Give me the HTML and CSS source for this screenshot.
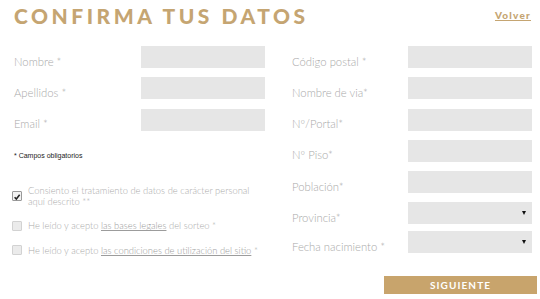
FILE: index.html
```html
<!DOCTYPE html>
<html lang="es">
<head>
<meta charset="utf-8">
<title>Confirma tus datos</title>
<link rel="stylesheet" href="styles.css">
</head>
<body>
<div class="page">
  <header class="head">
    <h1 class="title">CONFIRMA TUS DATOS</h1>
    <a class="back" href="#">Volver</a>
  </header>
  <div class="form">
    <div class="col col-left">
      <div class="row"><span class="label">Nombre *</span><span class="field"></span></div>
      <div class="row"><span class="label">Apellidos *</span><span class="field"></span></div>
      <div class="row"><span class="label">Email *</span><span class="field"></span></div>
      <p class="req">* Campos obligatorios</p>
      <div class="checks">
        <div class="check">
          <span class="box checked"><svg viewBox="0 0 10 10" width="10" height="10"><path d="M2 5.2 L4.2 7.6 L8.3 2.3" fill="none" stroke="#222" stroke-width="1.9"/></svg></span>
          <span class="ctext">Consiento el tratamiento de datos de carácter personal<br>aquí descrito **</span>
        </div>
        <div class="check">
          <span class="box"></span>
          <span class="ctext">He leído y acepto <a href="#">las bases legales</a> del sorteo *</span>
        </div>
        <div class="check">
          <span class="box"></span>
          <span class="ctext">He leído y acepto <a href="#">las condiciones de utilización del sitio</a> *</span>
        </div>
      </div>
    </div>
    <div class="col col-right">
      <div class="row"><span class="label">Código postal *</span><span class="field"></span></div>
      <div class="row"><span class="label">Nombre de via*</span><span class="field"></span></div>
      <div class="row"><span class="label">Nº/Portal*</span><span class="field"></span></div>
      <div class="row"><span class="label">Nº Piso*</span><span class="field"></span></div>
      <div class="row"><span class="label">Población*</span><span class="field"></span></div>
      <div class="row"><span class="label">Provincia*</span><span class="field select"><span class="arrow"></span></span></div>
      <div class="row row-last"><span class="label">Fecha nacimiento *</span><span class="field select"><span class="arrow"></span></span></div>
      <button class="next" type="button">SIGUIENTE</button>
    </div>
  </div>
</div>
</body>
</html>
```

FILE: styles.css
```css
html, body {
  margin: 0;
  padding: 0;
  background: #ffffff;
}
.page {
  width: 540px;
  height: 299px;
  overflow: hidden;
  font-family: Lato, "Liberation Sans", sans-serif;
}
.head {
  display: flex;
  justify-content: space-between;
  align-items: flex-start;
  padding: 4px 9px 0 14px;
  height: 42px;
  box-sizing: border-box;
}
.title {
  margin: 0;
  font-size: 21px;
  line-height: 24px;
  font-weight: 900;
  letter-spacing: 3.5px;
  color: #c5a572;
}
.back {
  margin-top: 5px;
  font-size: 10px;
  font-weight: 900;
  letter-spacing: 1.2px;
  color: #c5a572;
  text-decoration: underline;
}
.form {
  display: flex;
  padding-left: 14px;
  padding-top: 4px;
  gap: 27px;
}
.col {
  display: flex;
  flex-direction: column;
}
.col-left { width: 251px; }
.col-right { width: 240px; }
.row {
  display: flex;
  align-items: center;
  height: 22px;
  margin-bottom: 9.3px;
}
.row-last { margin-top: -2.5px; }
.label {
  flex: 1;
  font-size: 11.3px;
  font-weight: 300;
  color: #a9a9a9;
  padding-top: 8px;
}
.field {
  width: 124px;
  height: 22px;
  background: #e6e6e6;
  position: relative;
}
.select .arrow {
  position: absolute;
  right: 6px;
  top: 9px;
  border-left: 2.5px solid transparent;
  border-right: 2.5px solid transparent;
  border-top: 4px solid #111;
}
.req {
  margin: 12px 0 0;
  font-family: "Liberation Sans", Arial, sans-serif;
  font-size: 7px;
  color: #222222;
}
.checks {
  margin-top: 26px;
  margin-left: -2px;
  display: flex;
  flex-direction: column;
  gap: 13.5px;
}
.check {
  display: flex;
  align-items: center;
  gap: 6px;
}
.box {
  flex: none;
  width: 10px;
  height: 10px;
  box-sizing: border-box;
  border: 1px solid #d2d2d2;
  background: #ebebeb;
  border-radius: 1px;
  display: flex;
}
.box.checked {
  background: #f2f2f2;
  border-color: #999;
}
.ctext {
  font-size: 9.4px;
  line-height: 11px;
  font-weight: 300;
  color: #ababab;
  white-space: nowrap;
}
.ctext a {
  color: #9c9c9c;
  text-decoration: underline;
}
.next {
  margin: 13px 0 0 92px;
  width: 153px;
  height: 18px;
  border: none;
  background: #c8a46c;
  color: #ffffff;
  font-family: Lato, "Liberation Sans", sans-serif;
  font-size: 10px;
  font-weight: 700;
  letter-spacing: 1.1px;
  padding: 0;
}
```
